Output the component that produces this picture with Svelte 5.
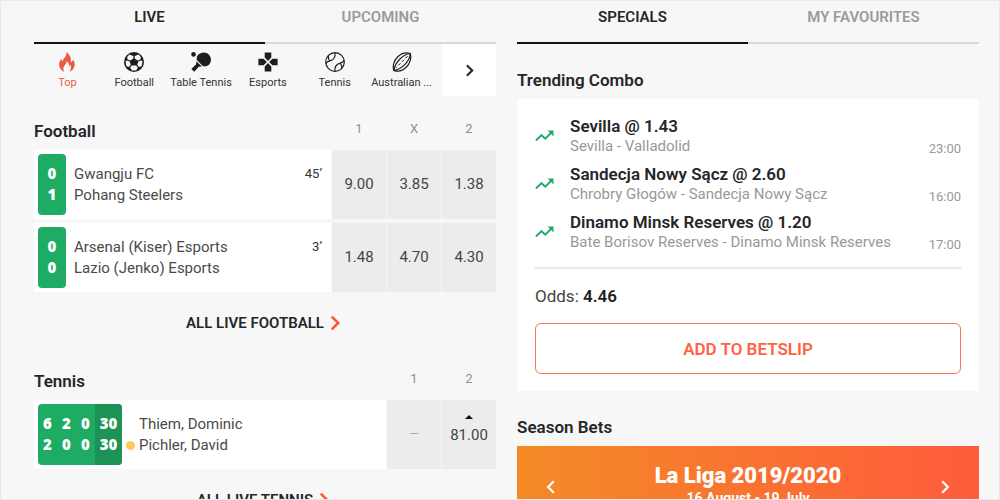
<script>
    const sports = [
        { id: "top", name: "Top" },
        { id: "football", name: "Football" },
        { id: "table-tennis", name: "Table Tennis" },
        { id: "esports", name: "Esports" },
        { id: "tennis", name: "Tennis" },
        { id: "rules", name: "Australian ..." },
    ];

    const sections = [
        {
            title: "Football",
            columns: ["1", "X", "2"],
            link: "ALL LIVE FOOTBALL",
            events: [
                {
                    teams: ["Gwangju FC", "Pohang Steelers"],
                    score: [["0", "1"]],
                    time: "45’",
                    odds: [{ value: "9.00" }, { value: "3.85" }, { value: "1.38" }],
                },
                {
                    teams: ["Arsenal (Kiser) Esports", "Lazio (Jenko) Esports"],
                    score: [["0", "0"]],
                    time: "3’",
                    odds: [{ value: "1.48" }, { value: "4.70" }, { value: "4.30" }],
                },
            ],
        },
        {
            title: "Tennis",
            columns: ["1", "2"],
            link: "ALL LIVE TENNIS",
            events: [
                {
                    teams: ["Thiem, Dominic", "Pichler, David"],
                    score: [["6", "2"], ["2", "0"], ["0", "0"], ["30", "30"]],
                    serving: 1,
                    odds: [{ value: "—", closed: true }, { value: "81.00", up: true }],
                },
            ],
        },
    ];

    const combo = [
        { pick: "Sevilla @ 1.43", match: "Sevilla - Valladolid", time: "23:00" },
        { pick: "Sandecja Nowy Sącz @ 2.60", match: "Chrobry Głogów - Sandecja Nowy Sącz", time: "16:00" },
        { pick: "Dinamo Minsk Reserves @ 1.20", match: "Bate Borisov Reserves - Dinamo Minsk Reserves", time: "17:00" },
    ];

    let leftTab = $state("LIVE");
    let rightTab = $state("SPECIALS");
    let activeSport = $state("top");
</script>

{#snippet chevron(dir, size)}
    <svg class="chevron" width={size} height={size} viewBox="0 0 14 14" aria-hidden="true">
        <path d={dir === "left" ? "M9.5 2 4.5 7l5 5" : "M4.5 2l5 5-5 5"} />
    </svg>
{/snippet}

{#snippet sportIcon(id)}
    <svg class="sport-icon" viewBox="0 0 20 20" aria-hidden="true">
        {#if id === "top"}
            <path
                fill="currentColor"
                d="M9.3 0c.5 2.500-.4 4.200-2 6-.8 1-1.500 1.900-1.600 3.200C4.800 8.600 4.500 7.700 4.500 6.700 3 8.400 2.200 10.300 2.200 12.500c0 3.500 2 6.200 5.100 7.300-1.500-2.400-1.200-4.600.6-6.700 1-1.200 1.700-2.300 1.700-3.900 2 1.200 2.700 3 2.300 5.100.8-.4 1.200-1 1.400-1.900 1.100 2.600.7 5.200-.9 7.400 3.200-1 5.300-3.700 5.300-7 0-2.200-.8-3.700-1.700-5.200-.3 1.300-.9 2.100-2 2.600C14.300 5.700 12.600 2 9.300 0z"
            />
        {:else if id === "football"}
            <circle cx="10" cy="10" r="10" fill="currentColor" />
            <g fill="#f7f7f7">
                <path d="M5.300 2.600 9.300 3.900v2.600L6.300 8.600 3.600 7.500 3.200 5z" />
                <path d="M14.700 2.600 10.700 3.900v2.600l3 2.100 2.700-1.100.4-2.500z" />
                <path d="M1.500 9.200 3.200 8.500l2.500 1.100 1 3.100-1.600 2.200-2.700-.6z" />
                <path d="m18.500 9.200-1.700-.7-2.500 1.100-1 3.100 1.600 2.200 2.700-.6z" />
                <path d="M7.700 13.600h4.600l1.500 2.200-1.600 2.400q-2.200.8-4.400 0l-1.600-2.400z" />
            </g>
        {:else if id === "table-tennis"}
            <circle cx="2.500" cy="2.400" r="2.300" fill="currentColor" />
            <path
                fill="currentColor"
                d="M6.900 3.100c3.100-3.400 8-3.500 10.800-.7 3.100 3 2.900 7.900-.1 10.500-1.600 1.400-3.700 1.700-5.800 1.100L6 8.300c-.6-1.800-.4-3.600.9-5.200z"
            />
            <path fill="currentColor" d="m5.300 9.200 5.600 5.400-3.100.2-4.500 5-3-2.900 4.800-4.700z" />
        {:else if id === "esports"}
            <path
                fill="currentColor"
                d="M6.700.4h6.600v5.200L10 8.900 6.700 5.600zM.4 6.700h5.200L8.900 10l-3.300 3.300H.4zM19.600 6.700v6.600h-5.200L11.100 10l3.300-3.300zM6.700 19.600v-5.200l3.300-3.300 3.300 3.300v5.200z"
            />
        {:else if id === "tennis"}
            <g fill="none" stroke="currentColor" stroke-width="1.200">
                <circle cx="10" cy="10" r="9.300" />
                <path d="M10 .8C10.800 6.500 8 8 4.800 8.900 2.900 9.500 1.500 10.300.8 11.800" />
                <path d="M10 19.200C9.200 13.500 12 12 15.200 11.100c1.900-.6 3.300-1.400 4-2.900" />
                <path d="M3.300 3.700C3.200 6 3.800 7.800 4.800 8.900M16.700 16.300c.1-2.300-.5-4.100-1.500-5.200" />
            </g>
        {:else}
            <g fill="none" stroke="currentColor" stroke-width="1.200">
                <path d="M18.200 1.500c1.500 4.200-.2 10.100-4 13.800-3.700 3.600-8.300 4.700-12.400 3.100C.3 14.300 1.800 8.700 5.500 5 9.300 1.200 13.800 0 18.200 1.500z" />
                <path d="M18.200 1.500C11 2.500 3.500 9.500 1.800 18.400M18.200 1.500C18 9 10 17.500 1.800 18.400" />
                <path d="M15.500 4.200 4 15.800" stroke-width="1" stroke-dasharray="3 2" />
            </g>
        {/if}
    </svg>
{/snippet}

{#snippet tabs(names, active, select)}
    <div class="tabs" role="tablist">
        {#each names as name}
            <button
                class="tab"
                class:active={name === active}
                role="tab"
                aria-selected={name === active}
                onclick={() => select(name)}>{name}</button
            >
        {/each}
    </div>
{/snippet}

<main class="page">
    <div class="column">
        {@render tabs(["LIVE", "UPCOMING"], leftTab, (n) => (leftTab = n))}

        <nav class="sports">
            <div class="sports-list">
                {#each sports as sport}
                    <button
                        class="sport"
                        class:active={sport.id === activeSport}
                        onclick={() => (activeSport = sport.id)}
                    >
                        {@render sportIcon(sport.id)}
                        <span>{sport.name}</span>
                    </button>
                {/each}
            </div>
            <button class="sports-next" aria-label="Next sports">{@render chevron("right", 15)}</button>
        </nav>

        {#each sections as section}
            <section>
                <header class="section-header">
                    <h2>{section.title}</h2>
                    <div class="column-names">
                        {#each section.columns as column}
                            <span>{column}</span>
                        {/each}
                    </div>
                </header>

                <div class="events">
                    {#each section.events as event}
                        <article class="event">
                            <div class="event-info">
                                <div class="score" class:sets={event.score.length > 1}>
                                    {#each event.score as part}
                                        <div class="score-part">
                                            <span>{part[0]}</span>
                                            <span>{part[1]}</span>
                                        </div>
                                    {/each}
                                </div>
                                {#if event.serving !== undefined}
                                    <div class="serve">
                                        {#each event.teams as _, i}
                                            <span class:serving={event.serving === i}></span>
                                        {/each}
                                    </div>
                                {/if}
                                <div class="teams">
                                    {#each event.teams as team}
                                        <span>{team}</span>
                                    {/each}
                                </div>
                                {#if event.time}
                                    <time>{event.time}</time>
                                {/if}
                            </div>
                            {#each event.odds as odd}
                                <button
                                    class="odd"
                                    class:closed={odd.closed}
                                    class:moved={odd.up}
                                    disabled={odd.closed}
                                >
                                    {#if odd.up}
                                        <svg class="up" viewBox="0 0 10 5" aria-hidden="true"><path d="M0 5 5 0l5 5z" /></svg>
                                    {/if}
                                    {odd.value}
                                </button>
                            {/each}
                        </article>
                    {/each}
                </div>

                <a class="all-link" href="#{section.title.toLowerCase()}">
                    {section.link}
                    {@render chevron("right", 18)}
                </a>
            </section>
        {/each}
    </div>

    <div class="column">
        {@render tabs(["SPECIALS", "MY FAVOURITES"], rightTab, (n) => (rightTab = n))}

        <h2 class="block-title">Trending Combo</h2>
        <div class="card">
            <ul class="combo">
                {#each combo as bet}
                    <li>
                        <svg class="trend" viewBox="0 0 20 12" aria-hidden="true">
                            <path class="line" d="M1 10.700 6.800 5l4 3.900L17 2.600" />
                            <path class="tip" d="M13.300.3H19.500v6.200z" />
                        </svg>
                        <div class="bet">
                            <strong>{bet.pick}</strong>
                            <span>{bet.match}</span>
                        </div>
                        <time>{bet.time}</time>
                    </li>
                {/each}
            </ul>
            <p class="total">Odds: <b>4.46</b></p>
            <button class="add">ADD TO BETSLIP</button>
        </div>

        <h2 class="block-title">Season Bets</h2>
        <div class="banner">
            <button aria-label="Previous">{@render chevron("left", 16)}</button>
            <div class="banner-text">
                <strong>La Liga 2019/2020</strong>
                <span>16 August - 19 July</span>
            </div>
            <button aria-label="Next">{@render chevron("right", 16)}</button>
        </div>
    </div>
</main>

<style>
    :global(body) {
        background: #f7f7f7;
    }

    .page {
        display: grid;
        grid-template-columns: 1fr 1fr;
        gap: 21px;
        height: 100vh;
        box-sizing: border-box;
        padding: 0 20px 0 33px;
        border: 1px solid #e9e9e9;
        overflow: hidden;
        font-family: Roboto, sans-serif;
        color: #252628;
    }

    .column {
        min-width: 0;
    }

    button {
        border: none;
        padding: 0;
        background: none;
        font: inherit;
        color: inherit;
        cursor: pointer;
    }

    h2 {
        margin: 0;
        font-size: 17px;
        font-weight: 600;
        line-height: 20px;
    }

    .chevron path {
        fill: none;
        stroke: currentColor;
        stroke-width: 2;
    }

    .tabs {
        display: grid;
        grid-template-columns: 1fr 1fr;
    }

    .tab {
        padding-bottom: 9px;
        border-bottom: 2px solid #d9d9d9;
        font-size: 15px;
        font-weight: 600;
        line-height: 32px;
        color: #9b9b9b;
    }

    .tab.active {
        border-color: #111;
        color: #252628;
    }

    .sports {
        display: flex;
        gap: 7px;
        margin-bottom: 8px;
    }

    .sports-list {
        display: grid;
        grid-template-columns: repeat(6, minmax(0, 1fr));
        flex: 1;
    }

    .sport {
        display: flex;
        flex-direction: column;
        align-items: center;
        gap: 4px;
        padding-top: 8px;
        font-size: 11px;
        line-height: 14px;
        white-space: nowrap;
        color: #333;
    }

    .sport.active {
        color: #ea5b3d;
    }

    .sport-icon {
        width: 20px;
        height: 20px;
    }

    .sport:not(.active) .sport-icon {
        color: #1d1d1d;
    }

    .sports-next {
        display: flex;
        align-items: center;
        justify-content: center;
        width: 54px;
        height: 52px;
        background: #fff;
    }

    .section-header {
        display: flex;
        justify-content: space-between;
        height: 46px;
        padding-top: 17px;
        box-sizing: border-box;
    }

    .column-names {
        display: flex;
        font-size: 13px;
        line-height: 15px;
        text-align: center;
        color: #8f8f8f;
        gap: 1px;
    }

    .column-names span {
        width: 54px;
    }

    .events {
        display: grid;
        gap: 4px;
    }

    .event {
        display: flex;
        gap: 1px;
    }

    .event-info {
        flex: 1;
        display: flex;
        padding: 4px;
        background: #fff;
        line-height: 21px;
    }

    .score {
        display: flex;
        border-radius: 4px;
        overflow: hidden;
        background: #1eac64;
        color: #fff;
        font-family: "Open Sans", sans-serif;
        font-size: 15px;
        font-weight: 800;
        text-align: center;
    }

    .score-part {
        display: flex;
        flex-direction: column;
        width: 28px;
        padding: 9px 0 10px;
    }

    .sets .score-part {
        width: 19px;
    }

    .sets .score-part:last-child {
        width: 27px;
        background: #1c9354;
    }

    .teams,
    .serve {
        display: flex;
        flex-direction: column;
        padding: 10px 0 9px;
    }

    .teams {
        flex: 1;
        margin-left: 8px;
        font-size: 15px;
        color: #4a4a4a;
    }

    .serve {
        margin-left: 4px;
        margin-right: -4px;
    }

    .serve span {
        width: 9px;
        height: 9px;
        margin: 6px 0;
        border-radius: 50%;
    }

    .serve .serving {
        background: #fdc95c;
    }

    .event-info time {
        padding: 9px 5px 0 0;
        font-size: 13px;
        color: #333;
    }

    .odd {
        display: flex;
        flex-direction: column;
        align-items: center;
        justify-content: center;
        width: 54px;
        background: #ececec;
        font-size: 15px;
        line-height: 21px;
        color: #444;
    }

    .odd.closed {
        font-size: 12px;
        color: #aaa;
    }

    .odd.moved {
        padding-bottom: 8px;
    }

    .up {
        width: 8px;
        height: 4px;
        margin-bottom: 6px;
        fill: #111;
    }

    .all-link {
        display: flex;
        align-items: center;
        justify-content: center;
        height: 62px;
        font-size: 15px;
        font-weight: 600;
        text-decoration: none;
        color: #252628;
    }

    .all-link .chevron {
        margin-left: 2px;
        color: #ff5533;
    }

    .block-title {
        padding: 26px 0 9px;
    }

    .card {
        padding: 17px 18px;
        background: #fff;
    }

    .combo {
        display: grid;
        gap: 8px;
        margin: 0;
        padding: 0 0 15px;
        border-bottom: 2px solid #e8e8e8;
        list-style: none;
    }

    .combo li {
        display: flex;
        align-items: flex-end;
    }

    .trend {
        align-self: center;
        width: 19px;
        height: 12px;
        margin-right: 16px;
    }

    .trend .line {
        fill: none;
        stroke: #1eac64;
        stroke-width: 2;
    }

    .trend .tip {
        fill: #1eac64;
    }

    .bet {
        flex: 1;
        display: flex;
        flex-direction: column;
    }

    .bet strong {
        font-size: 17px;
        font-weight: 600;
        line-height: 21px;
    }

    .bet span {
        font-size: 15px;
        line-height: 19px;
        color: #999;
    }

    .combo time {
        font-size: 13px;
        line-height: 15px;
        color: #999;
    }

    .total {
        margin: 17px 0;
        font-size: 17px;
        line-height: 20px;
        color: #444;
    }

    .total b {
        font-weight: 600;
        color: #1d1d1d;
    }

    .add {
        display: block;
        width: 100%;
        height: 51px;
        border: 1px solid #ff7358;
        border-radius: 6px;
        font-size: 17px;
        font-weight: 600;
        color: #ff6242;
    }

    .banner {
        display: flex;
        align-items: center;
        justify-content: space-between;
        height: 86px;
        padding: 0 26px;
        background: linear-gradient(90deg, #f38b26, #ff5b3c);
        color: #fff;
    }

    .banner-text {
        display: flex;
        flex-direction: column;
        align-items: center;
        align-self: flex-start;
        padding-top: 17px;
        font-weight: 700;
    }

    .banner-text strong {
        font-size: 22px;
        line-height: 26px;
    }

    .banner-text span {
        font-size: 14px;
        line-height: 18px;
    }
</style>
